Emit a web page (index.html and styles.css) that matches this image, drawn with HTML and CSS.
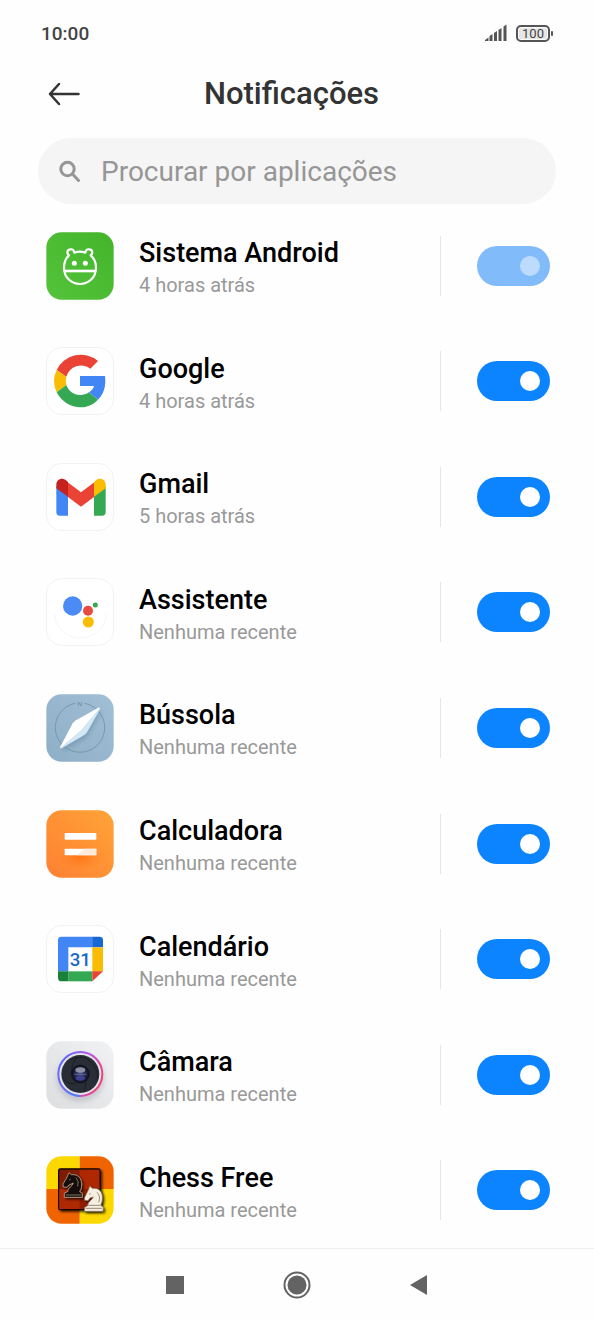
FILE: index.html
```html
<!DOCTYPE html>
<html lang="pt">
<head>
<meta charset="utf-8">
<meta name="viewport" content="width=device-width, initial-scale=1">
<title>Notificações</title>
<link rel="stylesheet" href="styles.css">
</head>
<body>
<div class="screen">
  <div class="status">
    <time class="clock">10:00</time>
    <svg class="signal" viewBox="0 0 24 18" aria-hidden="true"><path d="M1 17v-1l3.500-2.500v3.500zM5.500 17v-5l3-2v7zM10 17v-8l3-2v10zM14.500 17v-11l3-2v13zM19.500 17v-14.500l3-2v16.500z"/></svg>
    <span class="battery"><span class="battery-level">100</span></span>
  </div>

  <header class="header">
    <button class="back" type="button" aria-label="Voltar"><svg viewBox="0 0 32 24"><path d="M11 2 2 12l9 10M2 12h28.500"/></svg></button>
    <h1 class="title">Notificações</h1>
  </header>

  <label class="search">
    <svg class="search-icon" viewBox="0 0 22 22" aria-hidden="true"><circle cx="8.500" cy="9" r="6.700"/><path d="m13.500 14 6 6.500"/></svg>
    <input class="search-input" type="search" placeholder="Procurar por aplicações" aria-label="Procurar por aplicações">
  </label>

  <main class="apps">
    <div class="app">
      <svg class="icon" viewBox="30 29 204 204" aria-hidden="true">
        <defs><linearGradient id="green" x1="0" y1="1" x2="1" y2="0"><stop offset="0" stop-color="#54c33b"/><stop offset="1" stop-color="#43b52b"/></linearGradient></defs>
        <rect x="31" y="30" width="202" height="202" rx="46" fill="url(#green)"/>
        <g fill="none" stroke="#fff" stroke-width="6.500" stroke-linejoin="round">
          <path d="M99 99c-7-5-7-17 4-18 7-1 11 4 12 10 11-4 22-4 33 0 1-6 5-11 12-10 11 1 11 13 4 18 10 8 16 23 16 37 0 28-21 49-48 49s-48-21-48-49c0-14 6-29 15-37z"/>
          <path d="M85 146h94" stroke-width="8"/>
        </g>
        <circle cx="115" cy="123" r="7.500" fill="#fff"/><circle cx="148" cy="123" r="7.500" fill="#fff"/>
      </svg>
      <div class="text"><h2 class="name" id="app-1">Sistema Android</h2><p class="when">4 horas atrás</p></div>
      <input class="toggle" type="checkbox" role="switch" aria-labelledby="app-1" checked disabled>
    </div>

    <div class="app">
      <svg class="icon" viewBox="30 30 204 204" aria-hidden="true">
        <rect class="tile" x="31.500" y="31.500" width="201" height="201" rx="46"/>
        <path fill="#ea4335" d="M62 99A80 80 0 0 1 186 72L163 95A46 46 0 0 0 91 119z"/>
        <path fill="#fbbc05" d="M62 99a78 78 0 0 0 0 67l29-22a46 46 0 0 1 0-25z"/>
        <path fill="#34a853" d="M62 166c23 46 86 62 124 22l-27-22c-23 16-58 8-68-22z"/>
        <path fill="#4285f4" d="M132 117h75c4 30-4 55-21 71l-27-22c8-5 13-11 15-19h-42z"/>
      </svg>
      <div class="text"><h2 class="name" id="app-2">Google</h2><p class="when">4 horas atrás</p></div>
      <input class="toggle" type="checkbox" role="switch" aria-labelledby="app-2" checked>
    </div>

    <div class="app">
      <svg class="icon" viewBox="30 31 204 204" aria-hidden="true">
        <rect class="tile" x="31.500" y="32.500" width="201" height="201" rx="46"/>
        <path fill="#4285f4" d="M61 100l35 26v63H72q-11 0-11-11z"/>
        <path fill="#34a853" d="M209 100l-35 26v63h24q11 0 11-11z"/>
        <path fill="#ea4335" d="M95 89l40 30 40-30v43l-40 30-40-30z"/>
        <path fill="#c5221f" d="M61 107V96c0-16 17-23 29-13l6 5v44z"/>
        <path fill="#fbbc04" d="M209 107V96c0-16-17-23-29-13l-6 5v44z"/>
      </svg>
      <div class="text"><h2 class="name" id="app-3">Gmail</h2><p class="when">5 horas atrás</p></div>
      <input class="toggle" type="checkbox" role="switch" aria-labelledby="app-3" checked>
    </div>

    <div class="app">
      <svg class="icon" viewBox="30 30 204 204" aria-hidden="true">
        <rect class="tile" x="31.500" y="31.500" width="201" height="201" rx="46"/>
        <path d="M56 138a77 72 0 0 0 154 0" fill="none" stroke="#f0f0f0" stroke-width="2"/>
        <circle cx="110" cy="114" r="29" fill="#4b8bf5"/><circle cx="156" cy="128" r="15" fill="#e84b3f"/>
        <circle cx="157" cy="162" r="16.500" fill="#fbbc05"/><circle cx="178" cy="111" r="7.500" fill="#34a853"/>
      </svg>
      <div class="text"><h2 class="name" id="app-4">Assistente</h2><p class="when">Nenhuma recente</p></div>
      <input class="toggle" type="checkbox" role="switch" aria-labelledby="app-4" checked>
    </div>

    <div class="app">
      <svg class="icon" viewBox="30 29 204 204" aria-hidden="true">
        <defs>
          <linearGradient id="steel" x1="1" y1="0" x2="0" y2="1"><stop offset="0" stop-color="#a1bfd5"/><stop offset="1" stop-color="#8eafc7"/></linearGradient>
          <filter id="needle-shadow" x="-30%" y="-30%" width="170%" height="170%"><feDropShadow dx="5" dy="9" stdDeviation="7" flood-color="#52768f" flood-opacity=".35"/></filter>
        </defs>
        <rect x="31" y="30" width="202" height="202" rx="46" fill="url(#steel)"/>
        <path d="M118 57a74 74 0 1 0 28 0" fill="none" stroke="#7798af" stroke-width="3"/>
        <path d="M127 65V53l9 12V53" fill="none" stroke="#6d8fa8" stroke-width="2.500"/>
        <g filter="url(#needle-shadow)"><path fill="#fff" d="M192 71q-1-3-5-1l-67 38q-6 4-10 9l-37 70q-2 4 1 5l64-56z"/><path fill="#d3e8f6" d="M192 71q2 1 0 4l-40 70q-5 6-11 9l-63 37q-4 2-5 0l65-55z"/></g>
      </svg>
      <div class="text"><h2 class="name" id="app-5">Bússola</h2><p class="when">Nenhuma recente</p></div>
      <input class="toggle" type="checkbox" role="switch" aria-labelledby="app-5" checked>
    </div>

    <div class="app">
      <svg class="icon" viewBox="30 27 204 204" aria-hidden="true">
        <defs>
          <linearGradient id="orange" x1="1" y1="0" x2="0" y2="1"><stop offset="0" stop-color="#ffa436"/><stop offset="1" stop-color="#ff8033"/></linearGradient>
          <radialGradient id="glow"><stop offset="0" stop-color="#ff6a0a" stop-opacity=".7"/><stop offset="1" stop-color="#ff7a1c" stop-opacity="0"/></radialGradient>
        </defs>
        <rect x="31" y="28" width="202" height="202" rx="46" fill="url(#orange)"/>
        <ellipse cx="133" cy="168" rx="70" ry="38" fill="url(#glow)"/>
        <rect x="86" y="96" width="95" height="20" rx="2" fill="#fff"/><rect x="86" y="143" width="95" height="20" rx="2" fill="#fff"/>
        <path d="M122 163l26-20h31q2 0 2 2v16q0 2-2 2z" fill="#ffeadb"/>
      </svg>
      <div class="text"><h2 class="name" id="app-6">Calculadora</h2><p class="when">Nenhuma recente</p></div>
      <input class="toggle" type="checkbox" role="switch" aria-labelledby="app-6" checked>
    </div>

    <div class="app">
      <svg class="icon" viewBox="30 29 204 204" aria-hidden="true">
        <rect class="tile" x="31.500" y="30.500" width="201" height="201" rx="46"/>
        <path fill="#4285f4" d="M76 64h94v32H97v72H66V74q0-10 10-10z"/>
        <path fill="#1967d2" d="M169 64h21q11 0 11 10v22h-32z"/>
        <path fill="#fbbc04" d="M169 96h32v72h-32z"/>
        <path fill="#34a853" d="M97 168h72v30H97z"/>
        <path fill="#188038" d="M66 168h31v30H77q-11 0-11-11z"/>
        <path fill="#ea4335" d="M169 168h32l-32 30z"/>
        <text class="day" x="133" y="152" text-anchor="middle">31</text>
      </svg>
      <div class="text"><h2 class="name" id="app-7">Calendário</h2><p class="when">Nenhuma recente</p></div>
      <input class="toggle" type="checkbox" role="switch" aria-labelledby="app-7" checked>
    </div>

    <div class="app">
      <svg class="icon" viewBox="30 30 204 204" aria-hidden="true">
        <defs>
          <linearGradient id="shell" x1="1" y1="0" x2="0" y2="1"><stop offset="0" stop-color="#f1f2f3"/><stop offset="1" stop-color="#dcdee0"/></linearGradient>
          <linearGradient id="ring" x1="0" y1=".3" x2="1" y2=".7"><stop offset="0" stop-color="#5a6cf8"/><stop offset=".5" stop-color="#b956e8"/><stop offset="1" stop-color="#f83f70"/></linearGradient>
          <linearGradient id="ring-blue" x1=".6" y1="0" x2=".4" y2="1"><stop offset=".5" stop-color="#358cff" stop-opacity="0"/><stop offset="1" stop-color="#358cff"/></linearGradient>
          <radialGradient id="lens"><stop offset="0" stop-color="#49528e"/><stop offset=".55" stop-color="#262a50"/><stop offset="1" stop-color="#0b0d16"/></radialGradient>
          <filter id="soft" x="-30%" y="-30%" width="160%" height="160%"><feGaussianBlur stdDeviation="8"/></filter>
        </defs>
        <rect x="31" y="31" width="202" height="202" rx="46" fill="url(#shell)"/>
        <ellipse cx="133" cy="142" rx="72" ry="70" fill="#a9abb2" opacity=".5" filter="url(#soft)"/>
        <circle cx="133" cy="129" r="69" fill="#e4e4ea"/>
        <circle cx="133" cy="129" r="66" fill="none" stroke="url(#ring)" stroke-width="6"/>
        <path d="M67 129a66 66 0 0 0 66 66" fill="none" stroke="url(#ring-blue)" stroke-width="6"/>
        <circle cx="133" cy="129" r="57" fill="#292d36"/>
        <path d="M104 86q31-16 58 3M160 89q30 25 23 58M83 147q18 14 36 11M106 126q-1-26 16-47M150 150l-5 33" fill="none" stroke="#14171e" stroke-width="2"/>
        <circle cx="133" cy="129" r="27" fill="url(#lens)" stroke="#10131b" stroke-width="2"/>
        <ellipse cx="133" cy="117" rx="15" ry="8" fill="#b4b9c4" opacity=".7"/><path d="M114 130h38" stroke="#6b7fab" stroke-width="2"/><ellipse cx="133" cy="142" rx="14" ry="7" fill="#4347a0" opacity=".8"/>
      </svg>
      <div class="text"><h2 class="name" id="app-8">Câmara</h2><p class="when">Nenhuma recente</p></div>
      <input class="toggle" type="checkbox" role="switch" aria-labelledby="app-8" checked>
    </div>

    <div class="app">
      <svg class="icon" viewBox="30 29 204 204" aria-hidden="true">
        <defs>
          <clipPath id="board"><rect x="31" y="30" width="202" height="202" rx="46"/></clipPath>
          <linearGradient id="red" x1="0" y1="0" x2="1" y2="1"><stop offset="0" stop-color="#7a1c02"/><stop offset="1" stop-color="#991c04"/></linearGradient>
          <filter id="piece-shadow" x="-30%" y="-30%" width="170%" height="170%"><feDropShadow dx="5" dy="5" stdDeviation="3" flood-opacity=".75"/></filter>
        </defs>
        <g clip-path="url(#board)">
          <path fill="#fbd900" d="M30 29h101v99H30zM131 128h103v105H131z"/><path fill="#f06400" d="M131 29h103v99H131zM30 128h101v105H30z"/>
          <rect x="68" y="68" width="124" height="122" rx="5" fill="url(#red)" stroke="#140400" stroke-width="4" filter="url(#piece-shadow)"/>
          <path d="M131 70h59v58h-59zM70 128h61v60H70z" fill="#ad2803"/>
        </g>
        <g filter="url(#piece-shadow)" stroke-linejoin="round">
          <path d="M85 153v-13l10-4c0-12 15-16 17-26l-13 6-6 7-11-1-1-9 11-18 3-7 4-9 7 6c22-2 31 12 31 31 0 12-5 17-6 20l8 5v12z" fill="#17110c" stroke="#d8c2a9" stroke-width="2"/>
          <path d="M89 146h47M120 94q10 10 5 26M99 101l5-2" fill="none" stroke="#b19d88" stroke-width="2"/>
        </g>
        <g filter="url(#piece-shadow)" stroke-linejoin="round">
          <path d="M145 195l1-12 9-5c0-12 14-17 17-26l-10 3-6 8-10-1-1-7 10-20 3-6 3-10 8 7c23-2 31 13 30 31 0 10-4 16-5 20l8 6-1 12z" fill="#f6efe1" stroke="#796756" stroke-width="2"/>
          <path d="M149 186h49M183 138q12 12 5 30M157 177h35M159 144l5-2" fill="none" stroke="#655649" stroke-width="2"/>
        </g>
      </svg>
      <div class="text"><h2 class="name" id="app-9">Chess Free</h2><p class="when">Nenhuma recente</p></div>
      <input class="toggle" type="checkbox" role="switch" aria-labelledby="app-9" checked>
    </div>
  </main>

  <nav class="navbar">
    <button class="nav-button" type="button" aria-label="Aplicações recentes"><svg viewBox="0 0 28 28"><path d="M5 5h18v18H5z"/></svg></button>
    <button class="nav-button" type="button" aria-label="Início"><svg viewBox="0 0 28 28"><circle cx="14" cy="14" r="9.500"/><circle cx="14" cy="14" r="12.500" fill="none" stroke="#636363" stroke-width="2"/></svg></button>
    <button class="nav-button" type="button" aria-label="Voltar"><svg viewBox="0 0 28 28"><path d="M5 14 22 4v20z"/></svg></button>
  </nav>
</div>
</body>
</html>
```
FILE: styles.css
```css
* {
  box-sizing: border-box;
}

body {
  margin: 0;
  background: #fefefe;
  color: #000;
  font-family: Roboto, "Noto Sans", sans-serif;
}

button {
  padding: 0;
  border: 0;
  background: none;
}

svg {
  display: block;
}

.screen {
  display: flex;
  flex-direction: column;
  min-height: 100vh;
}

.status {
  display: flex;
  align-items: center;
  gap: 8px;
  height: 66px;
  padding: 0 41px;
  color: #444;
}

.clock {
  margin-right: auto;
  font-size: 19px;
  font-weight: 500;
}

.signal {
  width: 24px;
  height: 18px;
  fill: #555;
}

.battery {
  display: flex;
  align-items: center;
}

.battery::after {
  content: "";
  width: 2px;
  height: 5px;
  margin-left: 1px;
  border-radius: 1px;
  background: #555;
}

.battery-level {
  width: 34px;
  border: 2px solid #555;
  border-radius: 5px;
  background: #e6e6e6;
  box-shadow: inset 0 0 0 1px #fefefe;
  font-size: 13px;
  font-weight: 400;
  line-height: 13px;
  text-align: center;
}

.header {
  display: grid;
  grid-template-columns: 32px 1fr 32px;
  align-items: center;
  height: 56px;
  padding: 0 59px 0 48px;
}

.back svg {
  width: 32px;
  height: 24px;
  fill: none;
  stroke: #333;
  stroke-width: 2.5;
  stroke-linecap: round;
  stroke-linejoin: round;
}

.title {
  margin: 0;
  color: #333;
  font-size: 31px;
  font-weight: 500;
  line-height: 40px;
  text-align: center;
}

.search {
  display: flex;
  align-items: center;
  gap: 20px;
  height: 66px;
  margin: 16px 38px 4px;
  padding: 0 21px;
  border-radius: 33px;
  background: #f5f5f5;
}

.search-icon {
  flex: none;
  width: 22px;
  height: 22px;
  fill: none;
  stroke: #969696;
  stroke-width: 3;
  stroke-linecap: round;
}

.search-input {
  flex: 1;
  min-width: 0;
  padding: 2px 0 0;
  border: 0;
  outline: 0;
  background: none;
  color: #333;
  font: 28px/40px Roboto, "Noto Sans", sans-serif;
}

.search-input::placeholder {
  color: #969696;
}

.apps {
  display: grid;
  flex: 1;
  grid-auto-rows: 1fr;
}

.app {
  display: flex;
  align-items: center;
  padding: 0 44px 0 46px;
}

.icon {
  flex: none;
  width: 68px;
  height: 68px;
}

.tile {
  fill: #fff;
  stroke: #ececec;
  stroke-width: 2;
}

.day {
  fill: #1a66d0;
  font-size: 56px;
  font-weight: 500;
}

.text {
  flex: 1;
  min-width: 0;
  margin-left: 25px;
  padding-top: 3px;
}

.name {
  margin: 0;
  font-size: 27px;
  font-weight: 500;
  line-height: 36px;
}

.when {
  margin: 0;
  color: #999;
  font-size: 20px;
  line-height: 28px;
}

.app::after {
  content: "";
  order: 1;
  width: 1px;
  height: 60px;
  margin-right: 36px;
  background: #e6e6e6;
}

.toggle {
  display: flex;
  flex: none;
  order: 2;
  align-items: center;
  justify-content: flex-end;
  width: 73px;
  height: 40px;
  margin: 0;
  padding: 0 10px;
  border-radius: 20px;
  background: #ccc;
  appearance: none;
}

.toggle::before {
  content: "";
  width: 20px;
  height: 20px;
  border-radius: 50%;
  background: #fff;
}

.toggle:checked {
  background: #0d84ff;
}

.toggle:not(:checked) {
  justify-content: flex-start;
}

.toggle:disabled {
  background: #82bbfa;
}

.toggle:disabled::before {
  background: #bddcfd;
}

.navbar {
  display: flex;
  align-items: center;
  justify-content: center;
  gap: 50px;
  height: 72px;
  border-top: 1px solid #eee;
}

.nav-button {
  display: grid;
  place-items: center;
  width: 72px;
  height: 48px;
}

.nav-button svg {
  width: 28px;
  height: 28px;
  fill: #636363;
}
```
